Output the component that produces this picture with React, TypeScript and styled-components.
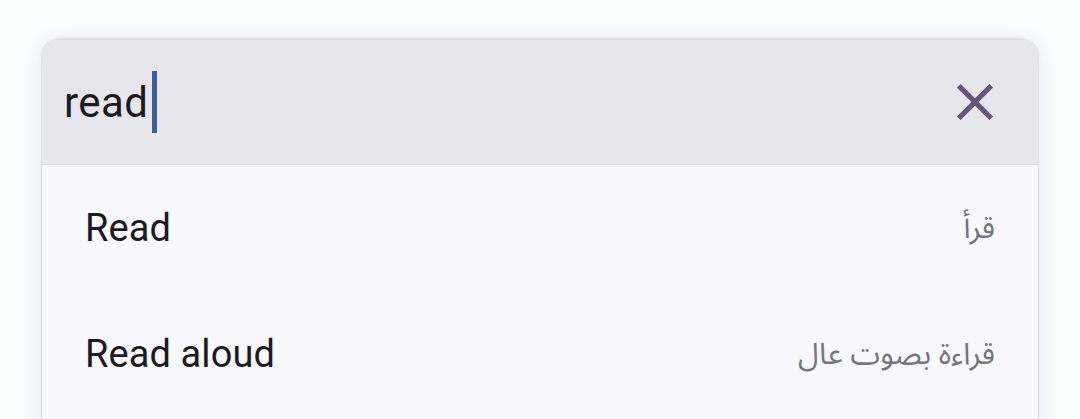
import React from 'react'
import styled, { createGlobalStyle } from 'styled-components'

const GlobalStyle = createGlobalStyle`
  html, body {
    margin: 0;
    padding: 0;
    background: #fcfdfe;
    font-family: Roboto, "Noto Sans", sans-serif;
  }
`

const Page = styled.div`
  padding: 39px 42px 0;
  height: 419px;
  box-sizing: border-box;
  overflow: hidden;
`

const Card = styled.div`
  min-height: 440px;
  border-radius: 17px 17px 0 0;
  overflow: hidden;
  background: #f8f8fd;
  box-shadow: 0 0 2px rgba(40, 40, 60, 0.25), 0 2px 22px rgba(40, 40, 100, 0.12);
`

const SearchBar = styled.div`
  display: flex;
  align-items: center;
  height: 126px;
  padding: 0 32px 0 22px;
  background: #e6e6ec;
  border-top: 1px solid #dcdce2;
  box-sizing: border-box;
  border-bottom: 1px solid #e1e1e8;
`

const Query = styled.div`
  flex: 1;
  display: flex;
  align-items: center;
  font-size: 42px;
  color: #1b1b1f;
  letter-spacing: 0.4px;
`

const Caret = styled.span`
  display: inline-block;
  width: 5px;
  height: 62px;
  margin-left: 4px;
  background: #3d6092;
`

const ClearButton = styled.button`
  display: flex;
  align-items: center;
  justify-content: center;
  width: 62px;
  height: 62px;
  padding: 0;
  border: 0;
  background: transparent;
  color: #65557a;
`

const Suggestion = styled.div`
  display: flex;
  align-items: center;
  justify-content: space-between;
  height: 126px;
  padding: 0 43px;
`

const Term = styled.span`
  font-size: 38px;
  color: #1c1b20;
  letter-spacing: 0.1px;
`

const Translation = styled.span`
  font-family: "Noto Sans Arabic", "DejaVu Sans", sans-serif;
  font-size: 30px;
  color: #75757b;
  direction: rtl;
`

const CloseIcon = () => (
  <svg width="62" height="62" viewBox="0 0 24 24" fill="currentColor">
    <path d="M19 6.41 17.59 5 12 10.59 6.41 5 5 6.41 10.59 12 5 17.59 6.41 19 12 13.41 17.59 19 19 17.59 13.41 12z" />
  </svg>
)

const suggestions = [
  { term: 'Read', translation: 'قرأ' },
  { term: 'Read aloud', translation: 'قراءة بصوت عال' }
]

export default function App() {
  return (
    <>
      <GlobalStyle />
      <Page>
        <Card>
          <SearchBar>
            <Query>
              read
              <Caret />
            </Query>
            <ClearButton aria-label="Clear">
              <CloseIcon />
            </ClearButton>
          </SearchBar>
          {suggestions.map((s) => (
            <Suggestion key={s.term}>
              <Term>{s.term}</Term>
              <Translation>{s.translation}</Translation>
            </Suggestion>
          ))}
        </Card>
      </Page>
    </>
  )
}
